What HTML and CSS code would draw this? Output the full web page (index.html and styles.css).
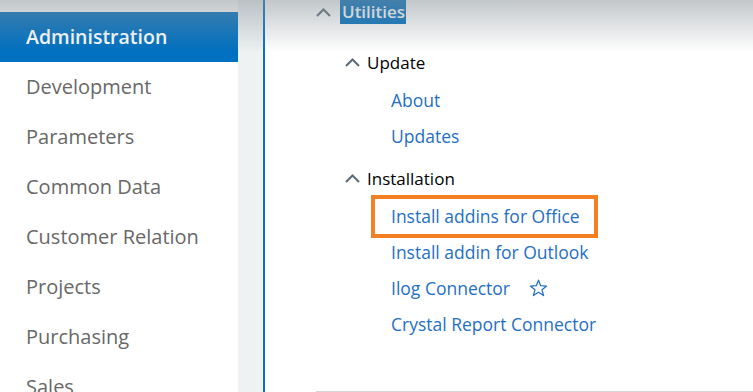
FILE: index.html
```html
<!DOCTYPE html>
<html lang="en">
<head>
    <meta charset="UTF-8">
    <meta name="viewport" content="width=device-width, initial-scale=1.0">
    <title>Utilities</title>
    <link rel="stylesheet" href="styles.css">
</head>
<body>
    <div class="layout">
        <nav class="sidebar">
            <a class="nav-item active">Administration</a>
            <a class="nav-item">Development</a>
            <a class="nav-item">Parameters</a>
            <a class="nav-item">Common Data</a>
            <a class="nav-item">Customer Relation</a>
            <a class="nav-item">Projects</a>
            <a class="nav-item">Purchasing</a>
            <a class="nav-item">Sales</a>
        </nav>
        <div class="gutter"></div>
        <main class="main">
            <div class="tree">
                <div class="tree-title">
                    <svg class="caret" width="15" height="9" viewBox="0 0 15 9"><path d="M1 8 L7.5 1.5 L14 8" fill="none" stroke="#5b6c79" stroke-width="2"/></svg>
                    <span class="title-sel">Utilities</span>
                </div>

                <div class="group">
                    <div class="group-head">
                        <svg class="caret" width="15" height="9" viewBox="0 0 15 9"><path d="M1 8 L7.5 1.5 L14 8" fill="none" stroke="#5b6c79" stroke-width="2"/></svg>
                        <span>Update</span>
                    </div>
                    <div class="links">
                        <div class="link-row"><a>About</a></div>
                        <div class="link-row"><a>Updates</a></div>
                    </div>
                </div>

                <div class="group">
                    <div class="group-head">
                        <svg class="caret" width="15" height="9" viewBox="0 0 15 9"><path d="M1 8 L7.5 1.5 L14 8" fill="none" stroke="#5b6c79" stroke-width="2"/></svg>
                        <span>Installation</span>
                    </div>
                    <div class="links">
                        <div class="link-row marked"><a>Install addins for Office</a></div>
                        <div class="link-row"><a>Install addin for Outlook</a></div>
                        <div class="link-row">
                            <a>Ilog Connector</a>
                            <svg class="star" width="19" height="18" viewBox="0 0 24 23"><path d="M12 1.5 L14.8 8.6 L22.4 9 L16.5 13.8 L18.5 21.2 L12 17 L5.5 21.2 L7.5 13.8 L1.6 9 L9.2 8.6 Z" fill="none" stroke="#1f6fc5" stroke-width="1.6" stroke-linejoin="round"/></svg>
                        </div>
                        <div class="link-row"><a>Crystal Report Connector</a></div>
                    </div>
                </div>

                <div class="tree-end"></div>
            </div>
        </main>
    </div>
    <div class="top-shadow"></div>
</body>
</html>
```

FILE: styles.css
```css
body { margin: 0; font-family: "Open Sans", "Noto Sans", sans-serif; background: #fff; overflow: hidden; height: 392px; }
.layout { display: flex; height: 392px; }

.sidebar { width: 238px; padding-top: 12px; flex-shrink: 0; }
.nav-item { display: block; height: 50px; line-height: 50px; padding-left: 26px; font-size: 20px; color: #686868; }
.nav-item.active { background-color: #0070c0; color: #fff; font-weight: 600; font-size: 19.5px; }

.gutter { width: 25px; background-color: #eef2f3; border-right: 2px solid #0a6fc4; flex-shrink: 0; }

.main { flex: 1; }
.tree { padding-left: 51px; }
.tree-title { display: flex; align-items: center; height: 24px; margin-bottom: 20px; }
.tree-title .caret { margin-right: 9px; }
.title-sel { background-color: #0070c0; color: #fff; font-size: 17px; font-weight: 600; line-height: 24px; padding: 0 1px 0 2px; }

.group { padding-left: 29px; margin-top: 6px; }
.group-head { display: flex; align-items: center; height: 36px; margin-bottom: 2px; font-size: 17px; color: #000; font-weight: 500; }
.group-head .caret { margin-right: 7px; }

.links { padding-left: 46px; }
.link-row { display: flex; align-items: center; height: 36px; font-size: 17.5px; }
.link-row a { color: #1f6fc5; }
.link-row.marked a { margin-left: -16px; padding: 1px 14px 1px 16px; line-height: 33px; outline: 4px solid #f58024; }
.star { margin-left: 19px; }

.tree-end { margin-top: 49px; border-top: 2px solid #d3d7da; }

.top-shadow { position: fixed; top: 0; left: 0; right: 0; height: 52px; pointer-events: none;
  background: linear-gradient(rgba(135, 144, 149, 0.5), rgba(255, 255, 255, 0)); }
```
